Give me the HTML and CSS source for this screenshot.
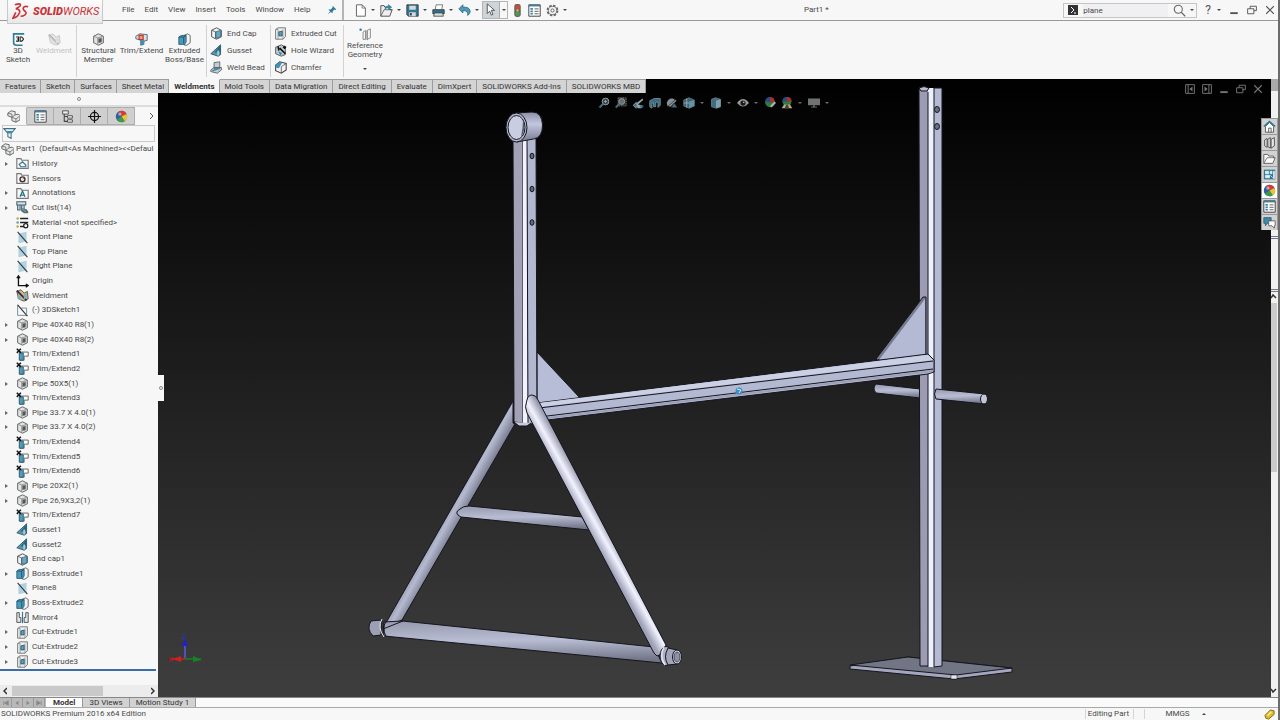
FILE: index.html
```html
<!DOCTYPE html>
<html lang="en">
<head>
<meta charset="utf-8">
<title>Part1 - SOLIDWORKS</title>
<link rel="stylesheet" href="styles.css">
</head>
<body>
<svg class="defs" aria-hidden="true">
  <defs>
    <linearGradient id="cyl" x1="0" y1="0" x2="0" y2="1"><stop offset="0" stop-color="#8b8ea3"/><stop offset=".4" stop-color="#c3c7de"/><stop offset="1" stop-color="#777a8e"/></linearGradient>
    <linearGradient id="bar" x1="0" y1="0" x2=".1" y2="1"><stop offset="0" stop-color="#9699ad"/><stop offset=".5" stop-color="#b9bdd3"/><stop offset="1" stop-color="#737689"/></linearGradient>
    <linearGradient id="legl" gradientUnits="userSpaceOnUse" x1="446" y1="504" x2="464" y2="514"><stop offset="0" stop-color="#85889c"/><stop offset=".5" stop-color="#b6bad0"/><stop offset="1" stop-color="#7b7e92"/></linearGradient>
    <linearGradient id="legr" gradientUnits="userSpaceOnUse" x1="588" y1="529" x2="604" y2="520"><stop offset="0" stop-color="#9fa2b8"/><stop offset=".5" stop-color="#f2f3ff"/><stop offset="1" stop-color="#9598ac"/></linearGradient>
  </defs>
  <symbol id="sk3d" viewBox="0 0 16 16"><path d="M15 1H2v11q0 3 4 3h7" fill="none" stroke="#2a7f9b" stroke-width="2"/><path d="M5 5h3v5H5M6 7.500h2M10 5v5h2l2-2V7l-2-2z" fill="none" stroke="#222" stroke-width="1.300"/></symbol>
  <symbol id="cube" viewBox="0 0 16 16"><path d="M2 4l6-3 6 3v8l-6 3-6-3z" fill="#dfe3e5" stroke="#666" stroke-width="1.200"/><path d="M2 4l5 2v9M7 6l7-2" fill="none" stroke="#888"/><path d="M8 7l4-1v5l-4 1z" fill="#555" stroke="#888"/></symbol>
  <symbol id="trimx" viewBox="0 0 16 16"><path d="M1 4l5-3 9 1v7l-4 1v4l-4 1V9L1 7z" fill="#d7e2e8" stroke="#456" /><path d="M7 9l4-1v6l-4 1z" fill="#3d91b0"/><path d="M5 3h5v5H5z" fill="#e99c8a" stroke="#c43a26" stroke-width="1.500"/></symbol>
  <symbol id="extr" viewBox="0 0 16 16"><path d="M7 3l5-2 3 2v9l-4 3H8z" fill="#f2f2f2" stroke="#555"/><path d="M1 5l3-2h6v8l-2 3H1z" fill="#4a9ab9" stroke="#20586e"/><path d="M1 5h6v8M7 5l3-2" fill="none" stroke="#1b4c60"/></symbol>
  <symbol id="ecap" viewBox="0 0 16 16"><path d="M2 4l6-3 6 3v8l-6 3-6-3z" fill="#eef2f4" stroke="#555" stroke-width="1.200"/><path d="M7 6l6-2v8l-6 2z" fill="#65a9c3" stroke="#386d82"/><path d="M2 4l5 2v8" fill="none" stroke="#555"/></symbol>
  <symbol id="guss" viewBox="0 0 16 16"><path d="M13 1v12l-3 2-9-3z" fill="#5b9ab2" stroke="#234a59"/><path d="M13 1v8L5 11z" fill="#2b647c"/><path d="M10 8v6" stroke="#a9cfdd" stroke-width="2"/></symbol>
  <symbol id="bead" viewBox="0 0 16 16"><path d="M5 2l7-1v8H5zM1 11l4-3h9v3l-5 4-8-2z" fill="#c5ced3" stroke="#555"/><path d="M3 12l9-3" stroke="#3d8dab" stroke-width="2"/></symbol>
  <symbol id="cutx" viewBox="0 0 16 16"><path d="M2 3l3-2h9v11l-3 3H2z" fill="#f0f0f0" stroke="#777" stroke-width="1.200"/><path d="M2 3h3v12M11 3v12" fill="none" stroke="#888"/><path d="M6 6l4-1v6H6z" fill="#5aa0bb" stroke="#23576b"/></symbol>
  <symbol id="wiz" viewBox="0 0 16 16"><path d="M2 4l7-3 5 3v9l-5 2-7-3z" fill="#bccbd2" stroke="#444"/><path d="M7 5l7 7M13 2v4M11 4h4M5 3l1 5" stroke="#111" stroke-width="2"/><path d="M5 9l5 2-2 3z" fill="#3d88a5"/></symbol>
  <symbol id="cham" viewBox="0 0 16 16"><path d="M2 5l5-4 8 2v8l-6 4-7-3z" fill="#f1f3f4" stroke="#444" stroke-width="1.300"/><path d="M2 5l5-4 3 1-4 7-4-1z" fill="#3f91b1"/><path d="M15 3l-6 4v8" fill="none" stroke="#555"/></symbol>
  <symbol id="refg" viewBox="0 0 16 16"><path d="M5 5v9h3V3zM10 3l4-2v11l-4 2zM10 3v12" fill="none" stroke="#777"/><circle cx="2" cy="2" r="1.500" fill="#2d7b99"/></symbol>
  <symbol id="new" viewBox="0 0 16 16"><path d="M3 1h7l4 4v10H3z" fill="#fff" stroke="#666" stroke-width="1.200"/><path d="M10 1v4h4" fill="none" stroke="#666"/></symbol>
  <symbol id="open" viewBox="0 0 16 16"><path d="M1 15V2h4l1 2h6v3h3l-3 8z" fill="#eee" stroke="#555" stroke-width="1.200"/><path d="M1 15l4-8h10" fill="none" stroke="#555"/><path d="M6 7q-1-5 4-5V0l5 4-5 3V5Q7 5 6 7" fill="#3588a7"/></symbol>
  <symbol id="save" viewBox="0 0 16 16"><path d="M1 1h14v14H3l-2-2z" fill="#33789a" stroke="#333"/><path d="M4 2h8v5H4zM4 10h8v5H4z" fill="#d4d9dc"/><path d="M5 11h2v3H5z" fill="#333"/></symbol>
  <symbol id="print" viewBox="0 0 16 16"><path d="M4 7l1-6h8l-1 6" fill="#fff" stroke="#666"/><path d="M1 7h14v5H1z" fill="#2d7290" stroke="#333"/><path d="M3 11h10l1 4H2z" fill="#ddd" stroke="#444"/></symbol>
  <symbol id="undo" viewBox="0 0 16 16"><path d="M1 6l5-5v3q8-1 9 5 0 3-3 5 1-6-6-6v3z" fill="#4d9cbb" stroke="#26617a"/></symbol>
  <symbol id="cursor" viewBox="0 0 16 16"><path d="M4 1v12l3-3 2 5 2-1-2-5h4z" fill="#fff" stroke="#555" stroke-width="1.200"/></symbol>
  <symbol id="light" viewBox="0 0 16 16"><rect x="4" y="0" width="8" height="16" rx="3" fill="#6b6457"/><circle cx="8" cy="4" r="2.700" fill="#d4483b"/><circle cx="8" cy="8" r="1.500" fill="#c9b98a"/><circle cx="8" cy="12" r="2.700" fill="#4c9b56"/></symbol>
  <symbol id="list" viewBox="0 0 16 16"><path d="M1 1h14v14H1z" fill="#fff" stroke="#444" stroke-width="1.200"/><path d="M1 1h14v2H1z" fill="#3d7f9a"/><path d="M3 5h3v2H3zM3 8h3v2H3zM3 11h3v2H3z" fill="#3b88a5"/><path d="M8 6h5M8 9h5M8 12h5" stroke="#444"/></symbol>
  <symbol id="gear" viewBox="0 0 16 16"><circle cx="8" cy="8" r="6" fill="none" stroke="#666" stroke-width="2.500" stroke-dasharray="3 1.700"/><circle cx="8" cy="8" r="5" fill="#f7f7f7" stroke="#666"/><circle cx="8" cy="8" r="2" fill="none" stroke="#666" stroke-width="1.200"/></symbol>
  <symbol id="pin" viewBox="0 0 16 16"><path d="M9 1l6 6-2 1-1-1-3 3v3l-3-2-5 4 4-5-3-3h4l3-3z" fill="#2e7998"/></symbol>
  <symbol id="find" viewBox="0 0 16 16"><circle cx="6.500" cy="6.500" r="5" fill="none" stroke="#666" stroke-width="1.300"/><path d="M10 10l5 5" stroke="#666" stroke-width="1.600"/></symbol>
  <symbol id="part" viewBox="0 0 16 16"><path d="M1 4l4-3 5 1v4l4-1 2 2v5l-5 3-5-2V9L1 7z" fill="#e6e9eb" stroke="#666" stroke-width="1.200"/><path d="M1 4l5 1v4l4-3M6 9l5 2v4M11 11l4-3" fill="none" stroke="#666"/></symbol>
  <symbol id="conf" viewBox="0 0 16 16"><path d="M2 1h7v4H2zM8 7h6v3H8zM8 12h6v3H8z" fill="#eee" stroke="#555" stroke-width="1.200"/><path d="M4 5v9h4M4 8h4" fill="none" stroke="#444" stroke-width="1.300"/></symbol>
  <symbol id="target" viewBox="0 0 16 16"><circle cx="8" cy="8" r="5" fill="none" stroke="#111" stroke-width="1.500"/><path d="M8 0v16M0 8h16" stroke="#111" stroke-width="1.500"/></symbol>
  <symbol id="ball" viewBox="0 0 16 16"><circle cx="8" cy="8" r="7" fill="#345f9f"/><path d="M8 8L4 2q7-3 10 3z" fill="#d83a34"/><path d="M8 8l6-3q3 5-2 9z" fill="#edc52e"/><path d="M8 8l4 6q-6 3-10-2z" fill="#3d9a4b"/><circle cx="6" cy="5" r="2" fill="#fff" opacity=".5"/></symbol>
  <symbol id="ballx" viewBox="0 0 16 16"><circle cx="8" cy="7" r="6.500" fill="#3d9a4b"/><path d="M8 7V0q6 0 6 7z" fill="#d83a34"/><path d="M8 7V0Q2 0 2 6z" fill="#2c5fae"/><path d="M8 12l6-6 2 2-6 6z" fill="#ddd"/></symbol>
  <symbol id="scene" viewBox="0 0 16 16"><circle cx="8" cy="6" r="6" fill="#3d9a4b"/><path d="M8 6V0q6 0 6 6z" fill="#d83a34"/><path d="M8 6V0Q2 0 2 6z" fill="#2c5fae"/><path d="M1 15l3-5h8l3 5z" fill="#e8d9a0"/><path d="M5 15l2-5h2l2 5z" fill="#555"/></symbol>
  <symbol id="filter" viewBox="0 0 16 16"><path d="M1 2h14l-5 6v6l-4-2V8z" fill="#eef4f6" stroke="#3c7189" stroke-width="1.300"/><path d="M4 5h8L9 8H7z" fill="#3d88a6"/></symbol>
  <symbol id="fold" viewBox="0 0 16 16"><path d="M1 14V2h5l1 2h8v10z" fill="#f8f8f8" stroke="#777" stroke-width="1.400"/></symbol>
  <symbol id="hist" viewBox="0 0 16 16"><use href="#fold"/><path d="M4 9l4-3 4 4v2H6z" fill="none" stroke="#2f7896" stroke-width="1.500"/></symbol>
  <symbol id="sens" viewBox="0 0 16 16"><use href="#fold"/><circle cx="8" cy="9" r="3" fill="none" stroke="#433" stroke-width="1.800"/><path d="M8 9l2-2" stroke="#a33"/></symbol>
  <symbol id="cutl" viewBox="0 0 16 16"><path d="M1 1h11v4H1zM2 5v6h3V5M7 5v7h3V5" fill="#cfe0e7" stroke="#456273" stroke-width="1.300"/><path d="M7 9l6 1 2 3v2h-5l-3-2z" fill="#666"/><path d="M8 10l4 3" stroke="#4c9ebd" stroke-width="2"/></symbol>
  <symbol id="mat" viewBox="0 0 16 16"><path d="M5 3h10M5 8h10M5 13h5" stroke="#222" stroke-width="1.800"/><circle cx="2" cy="3" r="1.500" fill="#c7a53e"/><circle cx="2" cy="8" r="1.500" fill="#5e9fb3"/><circle cx="2" cy="13" r="1.500" fill="#c7a53e"/><circle cx="12" cy="12" r="2.500" fill="#fff" stroke="#222" stroke-width="1.600"/></symbol>
  <symbol id="plane" viewBox="0 0 16 16"><path d="M3 3l10-2v12L3 15z" fill="#b0d2e0"/><path d="M2 1l12 14" stroke="#333" stroke-width="1.300"/></symbol>
  <symbol id="origin" viewBox="0 0 16 16"><path d="M3 2v11h11M1 4l2-3 2 3M12 11l3 2-3 2" fill="none" stroke="#111" stroke-width="1.600"/></symbol>
  <symbol id="weld" viewBox="0 0 16 16"><path d="M1 3l5-2 4 4 4-2 1 9-5 3-7-3z" fill="#d6ba74" stroke="#445"/><path d="M1 2l12 12" stroke="#224" stroke-width="2"/><path d="M2 8l4 1v5l-4-2zM9 7l4-2v6l-3 2z" fill="#7aacc4"/></symbol>
  <symbol id="sketch" viewBox="0 0 16 16"><path d="M2 1v13h12M5 5h8v7" fill="none" stroke="#6d94a5" stroke-width="1.200"/><path d="M2 1l12 14" stroke="#333" stroke-width="1.300"/></symbol>
  <symbol id="trim" viewBox="0 0 16 16"><path d="M5 5h10v5h-5v5H5z" fill="#fff" stroke="#666" stroke-width="1.200"/><path d="M4 6h5v9H4z" fill="#4d9cba" stroke="#235468"/><path d="M1 1l5 5M6 1L1 6" stroke="#111" stroke-width="1.800"/></symbol>
  <symbol id="mirror" viewBox="0 0 16 16"><path d="M1 2v12h5V8H4V2zM15 2v12h-5V8h2V2z" fill="#e2e7e9" stroke="#555" stroke-width="1.200"/><path d="M8 1v14" stroke="#2d7898" stroke-width="1.400"/></symbol>
  <symbol id="home" viewBox="0 0 16 16"><path d="M3 8v7h10V8L8 3z" fill="#fff" stroke="#444"/><path d="M7 15v-5h3v5" fill="none" stroke="#444"/><path d="M1 8l7-6 7 6" fill="none" stroke="#2d7898" stroke-width="2"/></symbol>
  <symbol id="lib" viewBox="0 0 16 16"><path d="M2 5l3-2v11l-3-2zM6 4l3-2v13l-3-2zM10 4l4-2v10l-4 3z" fill="#e8e8e8" stroke="#555" stroke-width="1.200"/></symbol>
  <symbol id="file" viewBox="0 0 16 16"><path d="M1 14V3h5l1 2h6v2h2l-3 7z" fill="#f8f8f8" stroke="#666" stroke-width="1.200"/><path d="M1 14l4-7h9" fill="none" stroke="#666"/></symbol>
  <symbol id="palette" viewBox="0 0 16 16"><path d="M1 2h14v12H1z" fill="#2f7795"/><path d="M3 4h4v3H3zM9 4h2v3H9zM13 4h1v9h-1zM3 9h5v3H3zM9 9l3 3" fill="#e1edf1" stroke="#e1edf1"/></symbol>
  <symbol id="chat" viewBox="0 0 16 16"><path d="M1 2h9v7H5l-2 3V9H1z" fill="#3c8bac" stroke="#31596a"/><path d="M7 6h8v6h-1v3l-3-3H7z" fill="#fff" stroke="#555"/></symbol>
  <symbol id="zoomf" viewBox="0 0 16 16"><circle cx="10" cy="6" r="4.500" fill="#46565c" stroke="#b9c4c9" stroke-width="1.300"/><path d="M8 6h4M10 4v4" stroke="#ddd"/><path d="M7 9l-5 5" stroke="#4b87a0" stroke-width="2.500"/></symbol>
  <symbol id="zooma" viewBox="0 0 16 16"><path d="M4 1h11v11H4z" fill="#333" stroke="#999" stroke-dasharray="2 1"/><circle cx="9" cy="6" r="4" fill="#7b8d90" stroke="#ccc"/><path d="M6 9l-5 5" stroke="#56899d" stroke-width="2.500"/></symbol>
  <symbol id="prev" viewBox="0 0 16 16"><path d="M1 11l5-5v2l8-6 1 2-7 6 5 1v4H8l-2-2v3z" fill="#b5c8d0"/><path d="M2 11l4-3v6zM11 11h4v3h-4z" fill="#468aa5"/></symbol>
  <symbol id="section" viewBox="0 0 16 16"><path d="M1 5l6-3h8v9l-3 3V7H9v6H6V8H4v7l-3-2z" fill="#4289a5" stroke="#a9bec7"/></symbol>
  <symbol id="dyn" viewBox="0 0 16 16"><path d="M1 8q2-7 8-6l5 3-8 8-4-1z" fill="#a9b7bd"/><path d="M2 13L13 3M7 14l4-6 4 6z" stroke="#333" fill="#5b8fa3"/></symbol>
  <symbol id="vcube" viewBox="0 0 16 16"><path d="M1 4l7-3 7 3v8l-7 3-7-3z" fill="#3f7c95" stroke="#8ca0a8"/><path d="M8 6l7-2v8l-7 3z" fill="#7eb5ca"/><path d="M1 8h7M5 2v12" stroke="#ccc" stroke-width="1.300"/></symbol>
  <symbol id="shade" viewBox="0 0 16 16"><path d="M2 3l5-2 7 2v10l-5 2-7-2z" fill="#4c8aa3" stroke="#8aa5b0"/><path d="M8 5l6-2v10l-6 2z" fill="#a4c8d5"/></symbol>
  <symbol id="eye" viewBox="0 0 16 16"><path d="M0 8q8-11 16 0-8 9-16 0" fill="#c2c2c2"/><circle cx="8" cy="8" r="3.500" fill="#222"/><circle cx="9" cy="7" r="1" fill="#fff"/></symbol>
  <symbol id="screen" viewBox="0 0 16 16"><path d="M0 2h16v9H0z" fill="#8b8f91"/><path d="M7 11h2v2h3v1H4v-1h3z" fill="#999"/></symbol>
  <symbol id="dockl" viewBox="0 0 16 16"><path d="M1 1h14v14H1zM5 1v14" fill="none" stroke="#777" stroke-width="1.500"/><path d="M12 4v8L7 8z" fill="#777"/></symbol>
  <symbol id="min" viewBox="0 0 16 16"><path d="M2 13h12" stroke="currentColor" stroke-width="3"/></symbol>
  <symbol id="restore" viewBox="0 0 16 16"><path d="M5 6V2h10v7h-4M1 6h10v8H1z" fill="none" stroke="currentColor" stroke-width="1.500"/></symbol>
  <symbol id="close" viewBox="0 0 16 16"><path d="M2 2l12 12M14 2L2 14" stroke="currentColor" stroke-width="1.700"/></symbol>
</svg>

<header class="titlebar">
  <div class="brand">
    <svg class="brand-mark" viewBox="0 0 20 18" aria-hidden="true"><path d="M3 2q6-2 6 0 0 2-5 4M4 6q5 1 4 4-2 5-7 6l3-6M17 4q-4-1-5 1t2 4q2 2-1 4-1 1-4 1" fill="none" stroke="#c8343a" stroke-width="1.700"/></svg>
    <span class="brand-name"><b>SOLID</b>WORKS</span>
  </div>
  <nav class="menu">
    <button>File</button><button>Edit</button><button>View</button><button>Insert</button><button>Tools</button><button>Window</button><button>Help</button>
  </nav>
  <button class="pin" aria-label="Pin menu"><svg class="ic s"><use href="#pin"/></svg></button>
  <div class="quick">
    <button aria-label="New"><svg class="ic"><use href="#new"/></svg><i class="caret"></i></button>
    <button aria-label="Open"><svg class="ic"><use href="#open"/></svg><i class="caret"></i></button>
    <button aria-label="Save"><svg class="ic"><use href="#save"/></svg><i class="caret"></i></button>
    <button aria-label="Print"><svg class="ic"><use href="#print"/></svg><i class="caret"></i></button>
    <button aria-label="Undo"><svg class="ic"><use href="#undo"/></svg><i class="caret"></i></button>
    <button class="select-tool" aria-label="Select"><span class="cursor-box"><svg class="ic"><use href="#cursor"/></svg></span><i class="caret"></i></button>
    <button class="single" aria-label="Rebuild"><svg class="ic"><use href="#light"/></svg></button>
    <button class="single" aria-label="File properties"><svg class="ic"><use href="#list"/></svg></button>
    <button aria-label="Options"><svg class="ic"><use href="#gear"/></svg><i class="caret"></i></button>
  </div>
  <div class="doc-name">Part1 *</div>
  <div class="search">
    <svg class="prompt" viewBox="0 0 10 10" aria-hidden="true"><rect width="10" height="10" fill="#333"/><path d="M3 2l3 3-3 3M6 8h2" fill="none" stroke="#fff"/></svg>
    <input type="text" value="plane" aria-label="Search commands">
    <button aria-label="Search"><svg class="ic"><use href="#find"/></svg><i class="caret"></i></button>
  </div>
  <div class="window-tools">
    <button class="help" aria-label="Help">?<i class="caret"></i></button>
    <button aria-label="Minimize"><svg class="ic s"><use href="#min"/></svg></button>
    <button aria-label="Restore"><svg class="ic s"><use href="#restore"/></svg></button>
    <button aria-label="Close"><svg class="ic s"><use href="#close"/></svg></button>
  </div>
</header>

<section class="ribbon">
  <div class="group first">
    <button class="big"><svg class="ic"><use href="#sk3d"/></svg>3D<br>Sketch</button>
    <button class="big" disabled><svg class="ic"><use href="#weld"/></svg>Weldment</button>
  </div>
  <div class="group second">
    <button class="big"><svg class="ic"><use href="#cube"/></svg>Structural<br>Member</button>
    <button class="big"><svg class="ic"><use href="#trimx"/></svg>Trim/Extend</button>
    <button class="big"><svg class="ic"><use href="#extr"/></svg>Extruded<br>Boss/Base</button>
  </div>
  <div class="group stack third">
    <button><svg class="ic"><use href="#ecap"/></svg>End Cap</button>
    <button><svg class="ic"><use href="#guss"/></svg>Gusset</button>
    <button><svg class="ic"><use href="#bead"/></svg>Weld Bead</button>
  </div>
  <div class="group stack fourth">
    <button><svg class="ic"><use href="#cutx"/></svg>Extruded Cut</button>
    <button><svg class="ic"><use href="#wiz"/></svg>Hole Wizard</button>
    <button><svg class="ic"><use href="#cham"/></svg>Chamfer</button>
  </div>
  <div class="group last">
    <button class="big ref"><svg class="ic"><use href="#refg"/></svg>Reference<br>Geometry<i class="caret"></i></button>
  </div>
</section>

<main class="work">
  <nav class="cmd-tabs">
    <button>Features</button><button>Sketch</button><button>Surfaces</button><button>Sheet Metal</button><button class="on">Weldments</button><button>Mold Tools</button><button>Data Migration</button><button>Direct Editing</button><button>Evaluate</button><button>DimXpert</button><button>SOLIDWORKS Add-Ins</button><button>SOLIDWORKS MBD</button>
  </nav>

  <aside class="panel">
    <div class="grip"><i class="dot"></i></div>
    <div class="panel-tabs">
      <button class="on" aria-label="Feature tree"><svg class="ic"><use href="#part"/></svg></button>
      <button aria-label="Properties"><svg class="ic"><use href="#list"/></svg></button>
      <button aria-label="Configurations"><svg class="ic"><use href="#conf"/></svg></button>
      <button aria-label="DimXpert"><svg class="ic"><use href="#target"/></svg></button>
      <button aria-label="Display"><svg class="ic"><use href="#ball"/></svg></button>
      <button class="more" aria-label="More"><svg class="chev" viewBox="0 0 4 8"><path d="M0 1l3 3-3 3" fill="none" stroke="#555"/></svg></button>
    </div>
    <label class="filter"><svg class="ic"><use href="#filter"/></svg><input type="text" aria-label="Filter tree"></label>
    <ul class="tree">
      <li class="root"><svg class="ic"><use href="#part"/></svg><span>Part1&nbsp; (Default&lt;As Machined&gt;&lt;&lt;Defaul</span></li>
      <li class="x"><svg class="ic"><use href="#hist"/></svg>History</li>
      <li><svg class="ic"><use href="#sens"/></svg>Sensors</li>
      <li class="x"><svg class="ic" viewBox="0 0 16 16"><use href="#fold"/><path d="M5 12l3-7 3 7M6 10h4" fill="none" stroke="#286f8e" stroke-width="1.600"/></svg>Annotations</li>
      <li class="x"><svg class="ic"><use href="#cutl"/></svg>Cut list(14)</li>
      <li><svg class="ic"><use href="#mat"/></svg>Material &lt;not specified&gt;</li>
      <li><svg class="ic"><use href="#plane"/></svg>Front Plane</li>
      <li><svg class="ic"><use href="#plane"/></svg>Top Plane</li>
      <li><svg class="ic"><use href="#plane"/></svg>Right Plane</li>
      <li><svg class="ic"><use href="#origin"/></svg>Origin</li>
      <li><svg class="ic"><use href="#weld"/></svg>Weldment</li>
      <li><svg class="ic"><use href="#sketch"/></svg>(-) 3DSketch1</li>
      <li class="x"><svg class="ic"><use href="#cube"/></svg>Pipe 40X40 R8(1)</li>
      <li class="x"><svg class="ic"><use href="#cube"/></svg>Pipe 40X40 R8(2)</li>
      <li><svg class="ic"><use href="#trim"/></svg>Trim/Extend1</li>
      <li><svg class="ic"><use href="#trim"/></svg>Trim/Extend2</li>
      <li class="x"><svg class="ic"><use href="#cube"/></svg>Pipe 50X5(1)</li>
      <li><svg class="ic"><use href="#trim"/></svg>Trim/Extend3</li>
      <li class="x"><svg class="ic"><use href="#cube"/></svg>Pipe 33.7 X 4.0(1)</li>
      <li class="x"><svg class="ic"><use href="#cube"/></svg>Pipe 33.7 X 4.0(2)</li>
      <li><svg class="ic"><use href="#trim"/></svg>Trim/Extend4</li>
      <li><svg class="ic"><use href="#trim"/></svg>Trim/Extend5</li>
      <li><svg class="ic"><use href="#trim"/></svg>Trim/Extend6</li>
      <li class="x"><svg class="ic"><use href="#cube"/></svg>Pipe 20X2(1)</li>
      <li class="x"><svg class="ic"><use href="#cube"/></svg>Pipe 26,9X3,2(1)</li>
      <li><svg class="ic"><use href="#trim"/></svg>Trim/Extend7</li>
      <li><svg class="ic"><use href="#guss"/></svg>Gusset1</li>
      <li><svg class="ic"><use href="#guss"/></svg>Gusset2</li>
      <li><svg class="ic"><use href="#ecap"/></svg>End cap1</li>
      <li class="x"><svg class="ic"><use href="#extr"/></svg>Boss-Extrude1</li>
      <li><svg class="ic"><use href="#plane"/></svg>Plane8</li>
      <li class="x"><svg class="ic"><use href="#extr"/></svg>Boss-Extrude2</li>
      <li><svg class="ic"><use href="#mirror"/></svg>Mirror4</li>
      <li class="x"><svg class="ic"><use href="#cutx"/></svg>Cut-Extrude1</li>
      <li class="x"><svg class="ic"><use href="#cutx"/></svg>Cut-Extrude2</li>
      <li class="x"><svg class="ic"><use href="#cutx"/></svg>Cut-Extrude3</li>
    </ul>
    <div class="rollback"></div>
    <div class="hscroll">
      <svg class="chev" viewBox="0 0 4 8"><path d="M4 1L1 4l3 3" fill="none" stroke="#333" stroke-width="1.500"/></svg>
      <div class="htrack"><div class="hthumb"></div></div>
      <svg class="chev" viewBox="0 0 4 8"><path d="M0 1l3 3-3 3" fill="none" stroke="#333" stroke-width="1.500"/></svg>
    </div>
    <button class="splitter" aria-label="Collapse panel"><i class="dot"></i></button>
  </aside>

  <section class="view">
    <svg class="model" viewBox="158 79 1113 618" preserveAspectRatio="xMinYMin meet" role="img" aria-label="Welded frame model">
      <g stroke="#14151f" stroke-width="1" stroke-linejoin="round">
        <path d="M850 666l58-9 104 11v4l-58 7-104-10z" fill="#a4a7bb"/>
        <path d="M850 665l58-8 104 11-56 7z" fill="#727584"/>
        <path d="M951 675h6v4h-6z" fill="#e5e6f0" stroke-width=".5"/>
        <path d="M876 384l44 5v9l-44-5q-4-5 0-9z" fill="url(#bar)"/>
        <path d="M919 89h10v577h-9z" fill="#9c9bb1"/>
        <path d="M928 88h6v579h-6z" fill="#edf0fd" stroke="none"/>
        <path d="M934 88h8v578l-8 1z" fill="#b5bad4"/>
        <path d="M928 92v575M919 88q5-3 10 0l-2 3h-6z" fill="#b9bbcb"/>
        <ellipse cx="937" cy="109.500" rx="2.500" ry="3" fill="#6c6f83"/><ellipse cx="937" cy="126.500" rx="2.500" ry="3" fill="#6c6f83"/>
        <path d="M936 389l49 5v10l-49-5q-3-5 0-10z" fill="url(#bar)"/>
        <ellipse cx="984" cy="399" rx="3.500" ry="5" fill="#c3c6d6"/>
        <path d="M923 297h3v58l-49 5-1-1z" fill="#777a8c"/>
        <path d="M925 299v56l-46 5z" fill="#b5bad4" stroke="none"/>
        <path d="M537 352l43 46-43 6z" fill="#b8bdd7"/>
        <path d="M537 403l391-49 6 6v12l-6 2-389 47z" fill="#b4b9d2"/>
        <path d="M538 403l390-48 5 5-394 47z" fill="#ccd0e4" stroke="none"/>
        <path d="M539 408l394-47M539 417l394-48" fill="none"/>
        <path d="M539 418l394-48v2l-394 48z" fill="#9da1b7" stroke="none"/>
        <path d="M513 137h10v286l-9-1z" fill="#a2a1b6"/>
        <path d="M523 137h4l1 288-5-1z" fill="#f0f2fd" stroke="none"/>
        <path d="M527 137h9l1 285-9 3z" fill="#b3b8d1"/>
        <path d="M514 422l5 4h8l4-3" fill="#c6cada"/>
        <g fill="#646779"><ellipse cx="532" cy="156" rx="2" ry="2.800"/><ellipse cx="532" cy="189" rx="2" ry="2.800"/><ellipse cx="532" cy="222.500" rx="2" ry="2.800"/></g>
        <path d="M516 113l16-1q10 0 10.500 13 0 13-9 14l-17 3z" fill="url(#cyl)"/>
        <ellipse cx="516.500" cy="127.500" rx="10.500" ry="14.500" fill="#b7bbd0"/>
        <ellipse cx="516.500" cy="127.500" rx="8.500" ry="12" fill="#c9cde2"/>
        <path d="M523 120q4 8-2 17 2-9 2-17z" fill="#555a6a" stroke="none"/>
        <path d="M513 401v22l2 1-113 196-19 8z" fill="url(#legl)"/>
        <path d="M384 622l18-1 252 26 8 16-278-27z" fill="url(#bar)"/>
        <path d="M383 629l20-8" fill="none"/>
        <path d="M461 517q-8-4-1-8 3-3 9-3l113 11 7 13z" fill="url(#bar)"/>
        <path d="M527 400q1-5 5-5 4 0 6 5l128 245q-2 9-9 11l-3-3-127-240q-3-6 0-13z" fill="url(#legr)"/>
        <path d="M371 621l10-1v15l-8 1q-7-7-2-15z" fill="#9da0b4"/>
        <path d="M382 619q-5 8 2 18" fill="none" stroke="#edeef6"/>
        <path d="M386 622q-5 6 0 14" fill="none"/>
        <ellipse cx="666" cy="656" rx="6" ry="9.500" fill="#aeb1c5"/>
        <path d="M664 647q-5 9 1 18" fill="none" stroke="#e6e7f0" stroke-width="1.500"/>
        <path d="M668 648l9 2v14l-9 1q-5-8 0-17z" fill="#a3a6ba"/>
        <ellipse cx="677" cy="657" rx="4.500" ry="7" fill="#cfd2e2"/><ellipse cx="677" cy="657" rx="3" ry="5" fill="#8e91a3" stroke-width=".6"/>
      </g>
      <g><circle cx="739" cy="391" r="3.500" fill="#3c8ec0"/><path d="M737 389l4 1-2 3" fill="none" stroke="#d3eefa"/></g>
      <g stroke-width="1.500"><path d="M185 658v-14" stroke="#5a5ae0"/><path d="M182 646l3-7 3 7z" fill="#2020d0"/><path d="M185 659h-14" stroke="#d02020"/><path d="M181 656l-8 3 8 3z" fill="#d02020"/><path d="M185 659h16" stroke="#168226"/><path d="M193 656l9 4-9 2z" fill="#168226"/></g>
      <text x="182" y="639" font-size="8" fill="#2c2cd0">Z</text><text x="168" y="662" font-size="8" fill="#b81818">X</text>
    </svg>
    <div class="hud">
      <button aria-label="Zoom to fit"><svg class="ic"><use href="#zoomf"/></svg></button>
      <button aria-label="Zoom to area"><svg class="ic"><use href="#zooma"/></svg></button>
      <button aria-label="Previous view"><svg class="ic"><use href="#prev"/></svg></button>
      <button aria-label="Section view"><svg class="ic"><use href="#section"/></svg></button>
      <button aria-label="Dynamic annotation"><svg class="ic"><use href="#dyn"/></svg></button>
      <button class="drop" aria-label="View orientation"><svg class="ic"><use href="#vcube"/></svg><i class="caret"></i></button>
      <button class="drop" aria-label="Display style"><svg class="ic"><use href="#shade"/></svg><i class="caret"></i></button>
      <button class="drop" aria-label="Hide or show items"><svg class="ic"><use href="#eye"/></svg><i class="caret"></i></button>
      <button aria-label="Edit appearance"><svg class="ic"><use href="#ballx"/></svg></button>
      <button class="drop" aria-label="Apply scene"><svg class="ic"><use href="#scene"/></svg><i class="caret"></i></button>
      <button class="drop" aria-label="View settings"><svg class="ic"><use href="#screen"/></svg><i class="caret"></i></button>
    </div>
    <div class="doc-tools">
      <button aria-label="Dock left"><svg class="ic s"><use href="#dockl"/></svg></button>
      <button class="flip" aria-label="Dock right"><svg class="ic s"><use href="#dockl"/></svg></button>
      <button aria-label="Minimize document"><svg class="ic s"><use href="#min"/></svg></button>
      <button aria-label="Restore document"><svg class="ic s"><use href="#restore"/></svg></button>
      <button aria-label="Close document"><svg class="ic s"><use href="#close"/></svg></button>
    </div>
  </section>

  <div class="vscroll">
    <div class="split-a"></div>
    <div class="split-b"></div>
    <svg class="arrow" viewBox="0 0 7 7"><path d="M0 5l2-3 3 3" fill="none" stroke="#333" stroke-width="1.500"/></svg>
    <div class="vtrack"><div class="vthumb"></div></div>
    <svg class="arrow" viewBox="0 0 7 7"><path d="M0 2l2 3 3-3" fill="none" stroke="#333" stroke-width="1.500"/></svg>
  </div>

  <div class="task-pane">
    <button aria-label="Resources"><svg class="ic"><use href="#home"/></svg></button>
    <button aria-label="Design library"><svg class="ic"><use href="#lib"/></svg></button>
    <button aria-label="File explorer"><svg class="ic"><use href="#file"/></svg></button>
    <button aria-label="View palette"><svg class="ic"><use href="#palette"/></svg></button>
    <button class="on" aria-label="Appearances"><svg class="ic"><use href="#ball"/></svg></button>
    <button aria-label="Custom properties"><svg class="ic"><use href="#list"/></svg></button>
    <button aria-label="Forum"><svg class="ic"><use href="#chat"/></svg></button>
  </div>
</main>

<nav class="doc-tabs">
  <div class="steps">
    <button aria-label="First"><svg viewBox="0 0 8 8"><path d="M1 1v6M7 1v6L2 4z" fill="#888" stroke="#888"/></svg></button>
    <button aria-label="Previous"><svg viewBox="0 0 8 8"><path d="M6 1v6L2 4z" fill="#888"/></svg></button>
    <button aria-label="Next"><svg viewBox="0 0 8 8"><path d="M2 1v6l4-3z" fill="#888"/></svg></button>
    <button aria-label="Last"><svg viewBox="0 0 8 8"><path d="M7 1v6M1 1v6l5-3z" fill="#888" stroke="#888"/></svg></button>
  </div>
  <button class="tab on">Model</button><button class="tab">3D Views</button><button class="tab">Motion Study 1</button>
</nav>

<footer class="status">
  <span class="product">SOLIDWORKS Premium 2016 x64 Edition</span>
  <span class="mode">Editing Part</span>
  <button class="units">MMGS<i class="caret up"></i></button>
  <svg class="tag" viewBox="0 0 12 12" aria-hidden="true"><path d="M1 7l6-6 4 1v4l-6 5-3-1z" fill="#e2bd28" stroke="#7c6515"/><path d="M4 7l4-4" stroke="#fff3a8" stroke-width="1.500"/></svg>
</footer>
</body>
</html>
```
FILE: styles.css
```css
* { box-sizing: border-box; }

body {
  margin: 0;
  height: 100vh;
  display: flex;
  flex-direction: column;
  overflow: hidden;
  border-right: 2px solid #6c6c6a;
  background: #f7f7f7;
  color: #4a4a4a;
  font: 8px/10px Roboto, "Open Sans", sans-serif;
}

button, input {
  margin: 0;
  padding: 0;
  border: 0;
  background: none;
  color: inherit;
  font: inherit;
  border-radius: 0;
}

button { white-space: nowrap; display: flex; align-items: center; justify-content: center; }

.defs { position: absolute; width: 0; height: 0; }
.ic { width: 13px; height: 13px; flex: none; display: block; }
.ic.s { width: 10px; height: 10px; }
.caret { border: 2px solid transparent; border-top-color: #444; border-bottom: 0; flex: none; }
.caret.up { border-top: 0; border-bottom: 2px solid #444; }
.dot { width: 4px; height: 4px; border: 1px solid #888; border-radius: 50%; }

/* Title bar */
.titlebar {
  position: relative;
  z-index: 3;
  flex: none;
  height: 21px;
  display: flex;
  align-items: center;
  padding-left: 117px;
  border-bottom: 1px solid #9a9a9a;
}
.brand {
  position: absolute;
  left: 7px;
  top: 0;
  height: 24px;
  display: flex;
  align-items: center;
  gap: 2px;
  padding: 0 3px 0 4px;
  background: linear-gradient(#fdfdfd, #e9e9e9);
  border: 1px solid #c8c8c8;
  border-top: 0;
  color: #c8343a;
}
.brand-mark { width: 19px; height: 19px; }
.brand-name { font-size: 11px; line-height: 14px; font-style: italic; font-weight: 400; }
.brand-name b { font-weight: 900; }
.menu { display: flex; }
.menu button { padding: 0 5px; }
.pin { margin: 0 5px 0 12px; }
.quick { display: flex; height: 20px; align-items: center; border-left: 2px solid #b5b5b5; padding-left: 7px; }
.quick button { width: 26px; height: 20px; gap: 4px; }
.quick button.single { width: 17px; }
.quick .select-tool { border: 1px solid #b5b5b5; height: 18px; margin: 0 1px; justify-content: flex-start; gap: 2px; }
.cursor-box { background: #ccd6da; height: 16px; width: 17px; padding: 1px; border-right: 1px solid #aaa; }
.doc-name { flex: 1; text-align: center; }
.search { width: 134px; height: 15px; display: flex; align-items: center; gap: 5px; padding: 0 2px 0 4px; border: 1px solid #c5c5c5; }
.search input { flex: 1; min-width: 0; height: 13px; background: #f0f0f2; }
.search button { gap: 4px; }
.prompt { width: 10px; height: 10px; }
.window-tools { display: flex; align-items: center; gap: 8px; padding: 0 3px 0 8px; color: #555; }
.window-tools .help { font-size: 12px; gap: 6px; }

/* Ribbon */
.ribbon { flex: none; height: 58px; display: flex; padding-top: 4px; }
.group { display: flex; height: 52px; border-right: 1px solid #d2d2d2; }
.first { width: 77px; }
.second { width: 130px; }
.third { width: 64px; }
.fourth { width: 73px; }
.group.last { border-right: 0; }
.big { width: 36px; flex-direction: column; justify-content: flex-start; padding-top: 8px; text-align: center; line-height: 9px; }
.second .big { width: 43px; }
.big:disabled { color: #c2c2c2; }
.big:disabled .ic { filter: grayscale(1); opacity: .3; }
.big.ref { width: 42px; padding-top: 3px; }
.big.ref .caret { margin-top: 9px; }
.stack { flex-direction: column; padding-left: 3px; }
.stack button { height: 17px; gap: 4px; justify-content: flex-start; }

/* Work area */
.work {
  position: relative;
  flex: 1;
  min-height: 0;
  display: grid;
  grid-template: 14px minmax(0, 1fr) / 158px minmax(0, 1fr) 7px;
  border-bottom: 1px solid #888;
}
.cmd-tabs { grid-area: 1 / 1 / 2 / 3; z-index: 2; display: flex; justify-self: start; background: #d4d4d4; }
.cmd-tabs button { padding: 0 5px; border-right: 1px solid #9c9c9c; border-top: 1px solid #9c9c9c; color: #333; }
.cmd-tabs button:nth-child(-n+5) { padding-right: 4px; }
.cmd-tabs .on { background: #f7f7f7; border-top-color: #f7f7f7; font-weight: 700; }

.panel { position: relative; grid-area: 2 / 1 / 3 / 2; z-index: 1; display: flex; flex-direction: column; background: #f7f7f7; }
.grip { flex: none; height: 14px; display: flex; align-items: center; justify-content: center; border-bottom: 2px solid #dcdcdc; }
.panel-tabs { flex: none; height: 18px; display: flex; }
.panel-tabs button { width: 27px; background: #cfcfcf; border: 1px solid #adadad; border-left: 0; }
.panel-tabs .on { background: #f7f7f7; border-color: #f7f7f7; border-right-color: #adadad; }
.panel-tabs .more { flex: 1; background: none; border: 0; padding-left: 10px; }
.chev { width: 4px; height: 8px; }
.filter { flex: none; height: 17px; margin: 0 3px 0 2px; display: flex; align-items: center; border: 1px solid #c9c9c9; }
.filter input { flex: 1; min-width: 0; background: none; }

.tree { flex: 1; min-height: 0; margin: 0; padding: 0; list-style: none; display: grid; grid-auto-rows: minmax(0, 1fr); }
.tree li { position: relative; display: flex; align-items: center; gap: 3px; padding-left: 16px; white-space: nowrap; }
.tree .root { padding-left: 1px; gap: 2px; }
.tree .x::before { content: ""; position: absolute; left: 5px; border: 2px solid transparent; border-left: 3px solid #666; border-right: 0; }
.rollback { flex: none; height: 2px; margin: 0 2px 14px 0; background: #3a6ea5; }
.hscroll { flex: none; height: 12px; display: flex; align-items: center; gap: 5px; padding: 0 3px; background: #ececec; }
.htrack { flex: 1; height: 10px; }
.hthumb { width: 68%; height: 10px; background: #c9c9c9; }
.splitter { position: absolute; left: 100%; top: 282px; width: 6px; height: 26px; background: #f7f7f7; }

.view { position: relative; grid-area: 1 / 2 / 3 / 3; background: linear-gradient(#000, #3e3e3e); overflow: hidden; }
.model { display: block; width: 100%; height: 100%; }
.hud { position: absolute; left: 437px; top: 17px; display: flex; align-items: center; opacity: .8; }
.hud button { width: 17px; height: 14px; }
.hud .ic { width: 12px; height: 12px; }
.hud .drop { width: 27px; gap: 5px; }
.hud .caret { border-top-color: #888; }
.doc-tools { position: absolute; right: 8px; top: 5px; display: flex; gap: 7px; color: #777; }
.flip .ic { transform: scaleX(-1); }

.vscroll { grid-area: 1 / 3 / 3 / 4; display: flex; flex-direction: column; background: #f1f1f1; }
.split-a { height: 160px; border-bottom: 3px double #777789; border-top: 12px solid #aaa; }
.split-b { height: 53px; border-bottom: 3px double #777789; }
.arrow { width: 7px; height: 7px; flex: none; margin: 1px 0 3px; }
.vtrack { flex: 1; }
.vthumb { width: 6px; height: 44%; background: #cacaca; }

.task-pane { position: absolute; right: 0; top: 39px; width: 17px; z-index: 2; display: flex; flex-direction: column; background: #d2d2d2; }
.task-pane button { height: 16px; border: 1px solid #999; border-bottom-width: 0; }
.task-pane .ic { width: 13px; height: 13px; }
.task-pane .on { background: #fff; }

/* Footer */
.doc-tabs { flex: none; height: 10px; display: flex; border-bottom: 1px solid #aaa; background: #fafafa; }
.steps { display: flex; width: 46px; padding: 0 1px; background: #b9b9b9; }
.steps button { flex: 1; border-right: 1px solid #999; }
.steps svg { width: 6px; height: 6px; }
.tab { padding: 0 6px; background: #d2d2d2; border-right: 1px solid #999; color: #333; line-height: 9px; }
.tab.on { background: #fff; font-weight: 700; padding: 0 7px; }
.status { flex: none; height: 12px; display: flex; align-items: center; padding: 0 3px 0 1px; }
.product { flex: 1; }
.mode { padding: 0 4px 0 2px; margin-right: 10px; border: solid #d5d5d5; border-width: 0 1px; }
.units { width: 62px; gap: 12px; margin-right: 58px; border-left: 1px solid #d5d5d5; padding-left: 20px; }
.tag { width: 11px; height: 11px; }
```
